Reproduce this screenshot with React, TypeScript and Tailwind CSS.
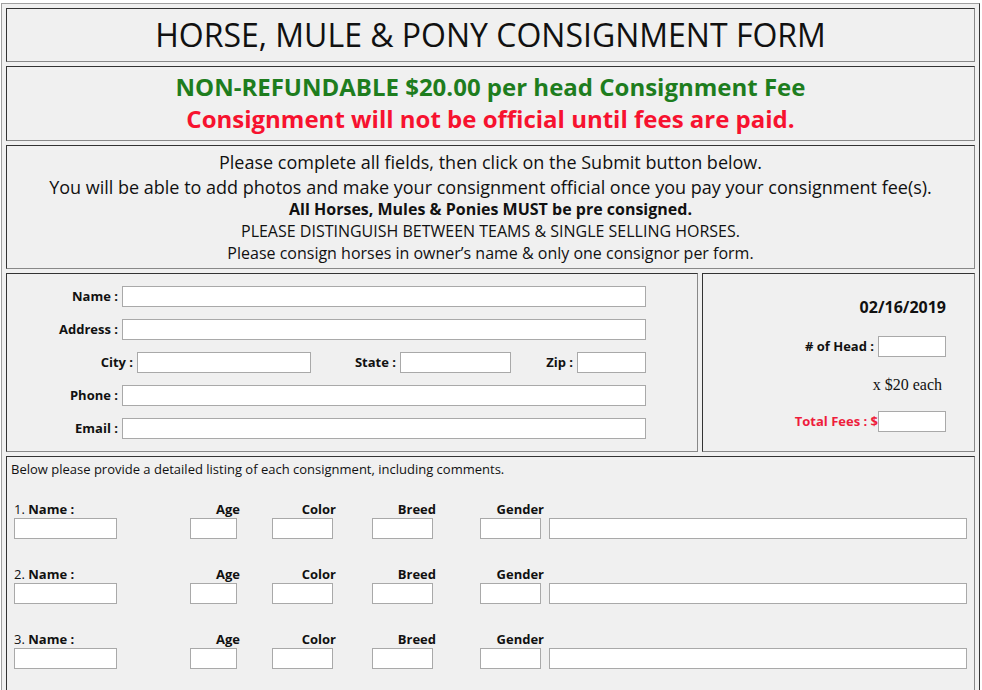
import React from "react";

const cell =
  "bg-[#f0f0f0] border border-t-[#333] border-l-[#333] border-b-[#888] border-r-[#888]";
const inp = "block h-[21px] bg-white border border-[#a9a9a9]";

function Field({ label, w, lw }: { label: string; w: number; lw: number }) {
  return (
    <div className="flex items-center">
      <div className="text-right font-bold text-[13px]" style={{ width: lw }}>
        {label}
      </div>
      <div className={inp + " ml-[4px]"} style={{ width: w }} />
    </div>
  );
}

function ItemRow({ n }: { n: number }) {
  return (
    <div className="flex items-end text-[13px]">
      <div className="ml-[3px] w-[103px]">
        <div className="leading-[18px] whitespace-nowrap">
          {n}. <span className="font-bold">Name :</span>
        </div>
        <div className={inp + " w-[103px]"} />
      </div>
      <div className="ml-[73px] w-[50px]">
        <div className="leading-[18px] text-right font-bold">Age</div>
        <div className={inp + " w-[47px]"} />
      </div>
      <div className="ml-[32px] w-[64px]">
        <div className="leading-[18px] text-right font-bold">Color</div>
        <div className={inp + " w-[61px]"} />
      </div>
      <div className="ml-[36px] w-[64px]">
        <div className="leading-[18px] text-right font-bold">Breed</div>
        <div className={inp + " w-[61px]"} />
      </div>
      <div className="ml-[44px] w-[64px]">
        <div className="leading-[18px] text-right font-bold">Gender</div>
        <div className={inp + " w-[61px]"} />
      </div>
      <div className="ml-[5px] w-[418px]">
        <div className={inp + " w-[418px]"} />
      </div>
    </div>
  );
}

export default function App() {
  return (
    <div
      className="min-h-[690px] bg-white text-[#111]"
      style={{ fontFamily: '"Open Sans", "Noto Sans", sans-serif' }}
    >
      <div className="ml-[1px] pt-[3px] w-[979px]">
        <div className="bg-[#f0f0f0] border border-t-[#a0a0a0] border-l-[#a0a0a0] border-r-[#333] border-b-[#333] p-[4px] flex flex-col gap-[4px]">
          <div className={cell + " p-[4px] text-center text-[32px] leading-[43.6px]"}>
            HORSE, MULE &amp; PONY CONSIGNMENT FORM
          </div>
          <div className={cell + " p-[4px] text-center text-[24px] font-bold leading-[32.7px]"}>
            <div className="text-[#1e7d1e]">
              NON-REFUNDABLE $20.00 per head Consignment Fee
            </div>
            <div className="text-[#f7122f]">
              Consignment will not be official until fees are paid.
            </div>
          </div>
          <div className={cell + " p-[4px] text-center"}>
            <div className="text-[18px] leading-[24.5px]">
              Please complete all fields, then click on the Submit button below.
            </div>
            <div className="text-[18px] leading-[24.5px]">
              You will be able to add photos and make your consignment official once you pay your consignment fee(s).
            </div>
            <div className="text-[16px] leading-[21.8px] font-bold">
              All Horses, Mules &amp; Ponies MUST be pre consigned.
            </div>
            <div className="text-[16px] leading-[21.8px]">
              PLEASE DISTINGUISH BETWEEN TEAMS &amp; SINGLE SELLING HORSES.
            </div>
            <div className="text-[16px] leading-[21.8px]">
              Please consign horses in owner’s name &amp; only one consignor per form.
            </div>
          </div>
          <div className="flex gap-[4px]">
            <div className={cell + " w-[692px] pt-[12px] pb-[12px] flex flex-col gap-[12px]"}>
              <Field label="Name :" lw={111} w={524} />
              <Field label="Address :" lw={111} w={524} />
              <div className="flex items-center text-[13px] font-bold">
                <div className="w-[126px] text-right">City :</div>
                <div className={inp + " ml-[4px] w-[174px]"} />
                <div className="w-[85px] text-right">State :</div>
                <div className={inp + " ml-[4px] w-[111px]"} />
                <div className="w-[62px] text-right">Zip :</div>
                <div className={inp + " ml-[4px] w-[69px]"} />
              </div>
              <Field label="Phone :" lw={111} w={524} />
              <Field label="Email :" lw={111} w={524} />
            </div>
            <div className={cell + " flex-1 pt-[23px] pr-[28px] flex flex-col items-end"}>
              <div className="text-[16px] font-bold leading-[21.8px]">02/16/2019</div>
              <div className="mt-[17px] flex items-center text-[13px] font-bold">
                <span># of Head :</span>
                <div className={inp + " ml-[4px] w-[68px]"} />
              </div>
              <div
                className="mt-[19px] text-[16px] leading-[18px] mr-[4px]"
                style={{ fontFamily: '"Liberation Serif", serif' }}
              >
                x $20 each
              </div>
              <div className="mt-[17px] flex items-center text-[13px] font-bold">
                <span className="text-[#ee1c3c]">Total Fees : $</span>
                <div className={inp + " w-[68px]"} />
              </div>
            </div>
          </div>
          <div className={cell + " p-[4px] h-[240px]"}>
            <div className="text-[13px] leading-[17.7px]">
              Below please provide a detailed listing of each consignment, including comments.
            </div>
            <div className="mt-[21px] flex flex-col gap-[26px]">
              <ItemRow n={1} />
              <ItemRow n={2} />
              <ItemRow n={3} />
            </div>
          </div>
        </div>
      </div>
    </div>
  );
}
